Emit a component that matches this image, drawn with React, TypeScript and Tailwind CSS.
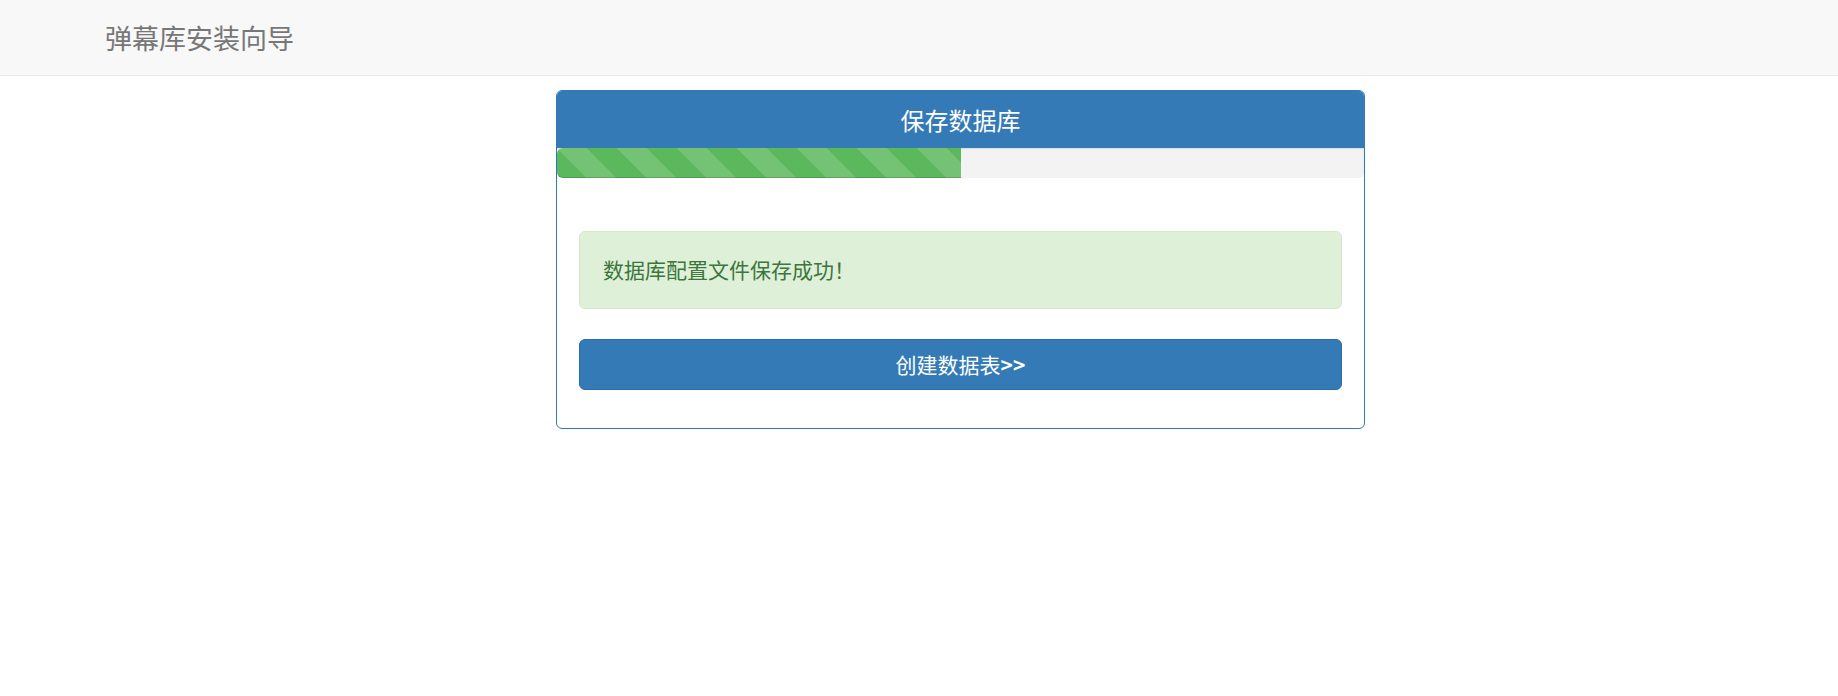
import React from "react";

const font = "font-['Microsoft_YaHei','Noto_Sans_CJK_SC','Noto_Sans',sans-serif]";

export default function App() {
  return (
    <div className={`min-h-[696px] bg-white ${font}`}>
      {/* Navbar */}
      <div className="h-[76px] bg-[#f8f8f8] border-b border-[#e7e7e7] flex items-center">
        <span className="ml-[105px] text-[27px] leading-none text-[#777777]">弹幕库安装向导</span>
      </div>

      {/* Panel */}
      <div className="ml-[556px] mt-[14px] w-[809px] border border-[#337ab7] rounded-[6px] overflow-hidden">
        <div className="h-[57px] bg-[#337ab7] flex items-center justify-center">
          <h3 className="text-[24px] leading-none text-white">保存数据库</h3>
        </div>

        {/* Progress */}
        <div className="h-[30px] bg-[#f3f3f3] rounded-b-[6px] shadow-[inset_0_1px_2px_rgba(0,0,0,0.1)]">
          <div
            className="h-full rounded-l-[6px] bg-[#5cb85c] bg-[linear-gradient(45deg,rgba(255,255,255,.15)_25%,transparent_25%,transparent_50%,rgba(255,255,255,.15)_50%,rgba(255,255,255,.15)_75%,transparent_75%,transparent)] bg-[length:60px_60px] shadow-[inset_0_-1px_0_rgba(0,0,0,0.15)]"
            style={{ width: "50%" }}
          />
        </div>

        <div className="px-[22px] pt-[53px] pb-[38px]">
          <div className="h-[78px] flex items-center px-[23px] bg-[#dff0d8] border border-[#d6e9c6] rounded-[6px] text-[#3c763d] text-[21px]">
            数据库配置文件保存成功！
          </div>
          <button className="mt-[30px] w-full h-[51px] bg-[#337ab7] border border-[#2e6da4] rounded-[6px] text-white text-[21px] flex items-center justify-center">
            创建数据表<span className="font-bold">&gt;&gt;</span>
          </button>
        </div>
      </div>
    </div>
  );
}
